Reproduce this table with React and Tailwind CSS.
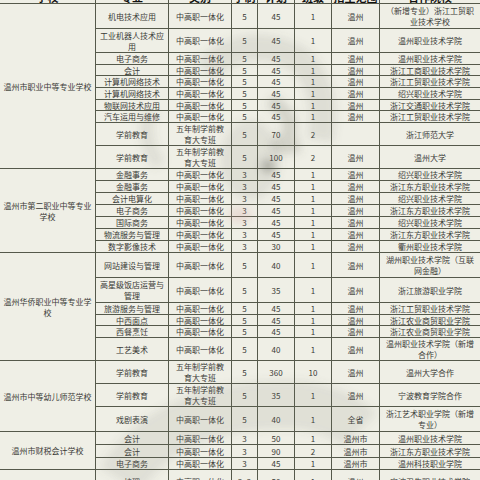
import React from 'react';

const groups = [
  {
    school: ['温州市职业中等专业学校'],
    rows: [
      ['机电技术应用', '中高职一体化', '5', '45', '1', '温州', ['（新增专业）浙江工贸职', '业技术学校']],
      [['工业机器人技术应', '用'], '中高职一体化', '5', '45', '1', '温州', '温州职业技术学院'],
      ['电子商务', '中高职一体化', '5', '45', '1', '温州', '温州职业技术学院'],
      ['会计', '中高职一体化', '5', '45', '1', '温州', '浙江工商职业技术学院'],
      ['计算机网络技术', '中高职一体化', '5', '45', '1', '温州', '浙江工贸职业技术学院'],
      ['计算机网络技术', '中高职一体化', '5', '45', '1', '温州', '绍兴职业技术学院'],
      ['物联网技术应用', '中高职一体化', '5', '45', '1', '温州', '浙江交通职业技术学院'],
      ['汽车运用与维修', '中高职一体化', '5', '45', '1', '温州', '浙江工贸职业技术学院'],
      ['学前教育', ['五年制学前教', '育大专班'], '5', '70', '2', '', '浙江师范大学'],
      ['学前教育', ['五年制学前教', '育大专班'], '5', '100', '2', '温州', '温州大学'],
    ],
  },
  {
    school: ['温州市第二职业中等专业', '学校'],
    rows: [
      ['金融事务', '中高职一体化', '3', '45', '1', '温州', '绍兴职业技术学院'],
      ['金融事务', '中高职一体化', '3', '45', '1', '温州', '浙江东方职业技术学院'],
      ['会计电算化', '中高职一体化', '3', '45', '1', '温州', '绍兴职业技术学院'],
      ['电子商务', '中高职一体化', '3', '45', '1', '温州', '浙江东方职业技术学院'],
      ['国际商务', '中高职一体化', '3', '45', '1', '温州', '绍兴职业技术学院'],
      ['物流服务与管理', '中高职一体化', '3', '45', '1', '温州', '浙江东方职业技术学院'],
      ['数字影像技术', '中高职一体化', '3', '30', '1', '温州', '衢州职业技术学院'],
    ],
  },
  {
    school: ['温州华侨职业中等专业学', '校'],
    rows: [
      ['网站建设与管理', '中高职一体化', '5', '40', '1', '温州', ['湖州职业技术学院（互联', '网金融）']],
      [['高星级饭店运营与', '管理'], '中高职一体化', '5', '35', '1', '温州', '浙江旅游职业学院'],
      ['旅游服务与管理', '中高职一体化', '5', '45', '1', '温州', '浙江工贸职业技术学院'],
      ['中西面点', '中高职一体化', '5', '45', '1', '温州', '浙江农业商贸职业学院'],
      ['西餐烹饪', '中高职一体化', '5', '45', '1', '温州', '浙江农业商贸职业学院'],
      ['工艺美术', '中高职一体化', '5', '40', '1', '温州', ['温州职业技术学院（新增', '合作）']],
    ],
  },
  {
    school: ['温州市中等幼儿师范学校'],
    rows: [
      ['学前教育', ['五年制学前教', '育大专班'], '5', '360', '10', '温州', '温州大学合作'],
      ['学前教育', ['五年制学前教', '育大专班'], '5', '35', '1', '温州', '宁波教育学院合作'],
      ['戏剧表演', '中高职一体化', '5', '40', '1', '全省', ['浙江艺术职业学院（新增', '专业）']],
    ],
  },
  {
    school: ['温州市财税会计学校'],
    rows: [
      ['会计', '中高职一体化', '3', '50', '1', '温州市', '温州职业技术学院'],
      ['会计', '中高职一体化', '3', '90', '2', '温州市', '浙江东方职业技术学院'],
      ['电子商务', '中高职一体化', '3', '45', '1', '温州市', '温州科技职业学院'],
    ],
  },
  {
    school: [''],
    rows: [['护理', '中高职一体化', '3+2', '50', '1', '温州', '宁波卫生职业技术学院']],
  },
];

const spans = {
  10: 'row-span-10',
  7: 'row-span-7',
  6: 'row-span-6',
  3: 'row-span-3',
  1: 'row-span-1',
};

const header = ['学校', '专业', '类别', '学制', '计划', '班级', '招生范围', '合作院校'];

const Text = ({ value }) => {
  const lines = Array.isArray(value) ? value : [value];
  return (
    <div className="text-center leading-[11px] whitespace-nowrap">
      {lines.map((l, i) => (
        <div key={i}>{l}</div>
      ))}
    </div>
  );
};

const Cell = ({ children, className = '' }) => (
  <div className={`bg-[#efefe6] flex items-center justify-center overflow-hidden ${className}`}>
    {children}
  </div>
);

export default function App() {
  return (
    <div
      className="relative w-[480px] h-[480px] overflow-hidden bg-[#efefe6] text-[8px] text-[#3a3a36]"
      style={{ fontFamily: '"Noto Sans CJK SC", "Noto Sans", sans-serif' }}
    >
      <div className="-mt-[17px] grid grid-cols-[95px_72px_62px_25px_36px_36px_47px_100px] grid-rows-[20px_24px_23px_11px_10px_11px_11px_10px_11px_22px_22px_11px_11px_11px_11px_11px_11px_11px_24px_24px_11px_10px_11px_22px_22px_22px_24px_12px_12px_11px_22px] gap-px bg-[#55594b]">
        {header.map((h) => (
          <Cell key={h} className="items-end font-bold text-[11px] text-[#111] leading-[12px]">
            {h}
          </Cell>
        ))}
        {groups.map((g, gi) => (
          <React.Fragment key={gi}>
            <Cell className={spans[g.rows.length]}>
              <Text value={g.school} />
            </Cell>
            {g.rows.map((r, ri) =>
              r.map((c, ci) => (
                <Cell key={`${ri}-${ci}`}>
                  <Text value={c} />
                </Cell>
              ))
            )}
          </React.Fragment>
        ))}
      </div>

      {/* faint watermark over the table */}
      <svg
        className="absolute inset-0 pointer-events-none"
        width="480"
        height="480"
        viewBox="0 0 480 480"
      >
        <defs>
          <filter id="blur" x="-20%" y="-20%" width="140%" height="140%">
            <feGaussianBlur stdDeviation="4" />
          </filter>
        </defs>
        <g filter="url(#blur)" fill="none" stroke="#6f6f66">
          <path d="M205 70 Q250 30 300 60 Q330 90 320 140" strokeWidth="26" opacity="0.13" />
          <path d="M150 110 Q140 140 160 165" strokeWidth="14" opacity="0.12" />
          <path d="M270 100 Q300 120 285 140 Q265 150 300 145" strokeWidth="14" opacity="0.22" />
          <path d="M120 480 Q170 400 300 405 Q340 410 360 430" strokeWidth="48" opacity="0.12" />
        </g>
        <g filter="url(#blur)">
          <ellipse cx="250" cy="160" rx="30" ry="40" fill="#6f6f66" opacity="0.12" />
          <circle cx="268" cy="166" r="7" fill="#55554e" opacity="0.35" />
          <ellipse cx="240" cy="215" rx="12" ry="8" fill="#d8a0a0" opacity="0.25" />
        </g>
      </svg>
    </div>
  );
}
